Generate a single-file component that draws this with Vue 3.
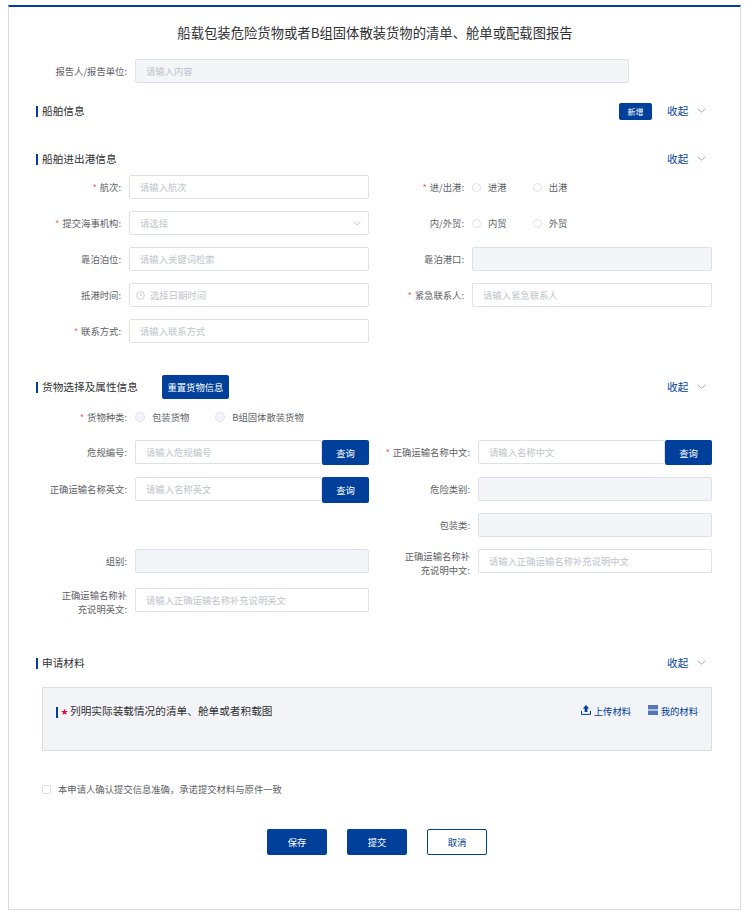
<template>
  <div class="page">
    <h1 class="title">船载包装危险货物或者B组固体散装货物的清单、舱单或配载图报告</h1>

    <div class="field reporter">
      <label class="label">报告人/报告单位:</label>
      <input class="input" disabled placeholder="请输入内容" />
    </div>

    <div class="section-head ship-head">
      <span class="section-title">船舶信息</span>
      <button class="btn add">新增</button>
      <span class="fold">收起<svg class="fold-icon" viewBox="0 0 10 5"><path d="M.5.5 5 4.5 9.5.5" /></svg></span>
    </div>

    <div class="section-head port-head">
      <span class="section-title">船舶进出港信息</span>
      <span class="fold">收起<svg class="fold-icon" viewBox="0 0 10 5"><path d="M.5.5 5 4.5 9.5.5" /></svg></span>
    </div>

    <div class="grid port-grid">
      <div class="field">
        <label class="label"><i>*</i>航次:</label>
        <input class="input" placeholder="请输入航次" />
      </div>
      <div class="field">
        <label class="label"><i>*</i>进/出港:</label>
        <div class="radios">
          <span v-for="r in ['进港', '出港']" :key="r" class="radio"><b></b>{{ r }}</span>
        </div>
      </div>
      <div class="field">
        <label class="label"><i>*</i>提交海事机构:</label>
        <div class="select">
          <input class="input" placeholder="请选择" />
          <svg class="select-icon" viewBox="0 0 8 5"><path d="M.5.5 4 4 7.5.5" /></svg>
        </div>
      </div>
      <div class="field">
        <label class="label">内/外贸:</label>
        <div class="radios">
          <span v-for="r in ['内贸', '外贸']" :key="r" class="radio"><b></b>{{ r }}</span>
        </div>
      </div>
      <div class="field">
        <label class="label">靠泊泊位:</label>
        <input class="input" placeholder="请输入关键词检索" />
      </div>
      <div class="field">
        <label class="label">靠泊港口:</label>
        <input class="input" disabled />
      </div>
      <div class="field">
        <label class="label">抵港时间:</label>
        <div class="select">
          <svg class="clock" viewBox="0 0 9 9"><circle cx="4.5" cy="4.5" r="3.9" /><path d="M4.5 2.2v2.4h2" /></svg>
          <input class="input date" placeholder="选择日期时间" />
        </div>
      </div>
      <div class="field">
        <label class="label"><i>*</i>紧急联系人:</label>
        <input class="input" placeholder="请输入紧急联系人" />
      </div>
      <div class="field">
        <label class="label"><i>*</i>联系方式:</label>
        <input class="input" placeholder="请输入联系方式" />
      </div>
    </div>

    <div class="section-head cargo-head">
      <span class="section-title">货物选择及属性信息</span>
      <button class="btn reset">重置货物信息</button>
      <span class="fold">收起<svg class="fold-icon" viewBox="0 0 10 5"><path d="M.5.5 5 4.5 9.5.5" /></svg></span>
    </div>

    <div class="field cargo-kind">
      <label class="label"><i>*</i>货物种类:</label>
      <div class="radios off">
        <span v-for="r in ['包装货物', 'B组固体散装货物']" :key="r" class="radio"><b></b>{{ r }}</span>
      </div>
    </div>

    <div class="grid cargo-grid">
      <div class="field">
        <label class="label">危规编号:</label>
        <div class="query"><input class="input" placeholder="请输入危规编号" /><button class="btn">查询</button></div>
      </div>
      <div class="field">
        <label class="label"><i>*</i>正确运输名称中文:</label>
        <div class="query"><input class="input" placeholder="请输入名称中文" /><button class="btn">查询</button></div>
      </div>
      <div class="field">
        <label class="label">正确运输名称英文:</label>
        <div class="query"><input class="input" placeholder="请输入名称英文" /><button class="btn tall">查询</button></div>
      </div>
      <div class="field">
        <label class="label">危险类别:</label>
        <input class="input" disabled />
      </div>
      <div class="field empty"></div>
      <div class="field">
        <label class="label">包装类:</label>
        <input class="input" disabled />
      </div>
      <div class="field">
        <label class="label">组别:</label>
        <input class="input" disabled />
      </div>
      <div class="field">
        <label class="label two-line">正确运输名称补充说明中文:</label>
        <input class="input" placeholder="请输入正确运输名称补充说明中文" />
      </div>
      <div class="field">
        <label class="label two-line">正确运输名称补充说明英文:</label>
        <input class="input" placeholder="请输入正确运输名称补充说明英文" />
      </div>
    </div>

    <div class="section-head apply-head">
      <span class="section-title">申请材料</span>
      <span class="fold">收起<svg class="fold-icon" viewBox="0 0 10 5"><path d="M.5.5 5 4.5 9.5.5" /></svg></span>
    </div>

    <div class="material">
      <span class="material-name"><em>★</em>列明实际装载情况的清单、舱单或者积载图</span>
      <span class="material-link">
        <svg class="link-icon" viewBox="0 0 10 10">
          <path class="solid" d="M5 0 8.2 3.4H6.4V7H3.6V3.4H1.8z" />
          <path class="line" d="M.5 6v3.4h9V6" />
        </svg>上传材料
      </span>
      <span class="material-link mine">
        <svg class="link-icon" viewBox="0 0 10 10">
          <rect class="solid" width="10" height="4.2" />
          <rect class="solid" y="5.6" width="10" height="4.4" />
          <rect class="soft" y="4.2" width="10" height="1.4" />
        </svg>我的材料
      </span>
    </div>

    <label class="agree"><span class="check"></span>本申请人确认提交信息准确，承诺提交材料与原件一致</label>

    <div class="actions">
      <button class="btn">保存</button>
      <button class="btn">提交</button>
      <button class="btn plain">取消</button>
    </div>
  </div>
</template>

<script setup>
</script>

<style>
body {
  background: #fff;
}
</style>

<style scoped>
.page {
  box-sizing: border-box;
  width: 733px;
  height: 905px;
  margin: 5px 0 0 8px;
  padding: 0 28px 0 27px;
  border: 1px solid #ddd;
  border-top: 2px solid #00409a;
  font-family: "Noto Sans CJK SC", "Liberation Sans", sans-serif;
  font-size: 9.33px;
  color: #606266;
}
.title {
  height: 52px;
  margin: 0;
  padding-left: 2px;
  font-size: 13.33px;
  font-weight: 400;
  line-height: 52px;
  text-align: center;
  color: #303133;
}
.field {
  display: flex;
  align-items: flex-start;
  height: 24px;
}
.label {
  box-sizing: border-box;
  flex: 1;
  min-width: 0;
  padding-right: 8px;
  line-height: 24px;
  text-align: right;
}
.label i {
  margin-right: 3px;
  font-style: normal;
  color: #f56c6c;
}
.two-line {
  flex: none;
  width: 74px;
  margin-left: auto;
  line-height: 14px;
}
.input {
  box-sizing: border-box;
  width: 240px;
  height: 24px;
  padding: 0 10px;
  border: 1px solid #dfe1ea;
  border-radius: 2px;
  outline: none;
  background: #fff;
  font: inherit;
  color: #606266;
}
.input::placeholder {
  color: #c0c4cc;
}
.input:disabled {
  background: #f4f5f9;
}
.reporter .label {
  flex: none;
  width: 99px;
}
.reporter .input {
  width: 494px;
}
.section-head {
  display: flex;
  align-items: center;
  height: 24px;
}
.section-title {
  height: 11px;
  padding-left: 4px;
  border-left: 2px solid #00409a;
  font-size: 10.67px;
  line-height: 9px;
  color: #303133;
}
.ship-head {
  margin-top: 16px;
}
.port-head {
  margin-top: 24px;
}
.cargo-head {
  height: 25px;
  margin-top: 32px;
}
.apply-head {
  margin-top: 39px;
}
.fold {
  display: flex;
  align-items: center;
  width: 39px;
  margin: -2px 6px 0 auto;
  font-size: 10.67px;
  white-space: nowrap;
  color: #00409a;
}
.add + .fold {
  margin-left: 15px;
}
.fold-icon {
  flex: none;
  width: 9px;
  height: 5px;
  margin-left: 9px;
  fill: none;
  stroke: #7a90bd;
  stroke-width: .8;
}
.btn {
  width: 47px;
  height: 25px;
  padding: 0;
  border: 0;
  border-radius: 2px;
  background: #00409a;
  font: inherit;
  color: #fff;
}
.add {
  width: 33px;
  height: 17px;
  margin-left: auto;
  font-size: 8px;
}
.reset {
  width: 67px;
  height: 24px;
  margin: -1px 0 0 24px;
}
.grid {
  display: grid;
  grid-template-columns: 333px 332px;
  column-gap: 11px;
}
.port-grid {
  margin-top: 4px;
  row-gap: 12px;
}
.cargo-grid {
  grid-template-rows: 25px 24px 24px 27px;
  margin-top: 11px;
  row-gap: 12px;
}
.radios {
  display: flex;
  gap: 26px;
  box-sizing: border-box;
  width: 240px;
  height: 24px;
}
.radio {
  display: flex;
  align-items: center;
}
.radio b {
  box-sizing: border-box;
  width: 9px;
  height: 9px;
  margin-right: 7px;
  border: 1px solid #dfe1ea;
  border-radius: 50%;
  background: #fff;
}
.off b {
  width: 10px;
  height: 10px;
  background: #f4f5f9;
}
.select {
  position: relative;
}
.select-icon {
  position: absolute;
  top: 10px;
  right: 8px;
  width: 8px;
  height: 5px;
  fill: none;
  stroke: #c0c4cc;
  stroke-width: .8;
}
.clock {
  position: absolute;
  top: 8px;
  left: 7px;
  width: 9px;
  height: 9px;
  fill: none;
  stroke: #c0c4cc;
  stroke-width: .8;
}
.date {
  padding-left: 20px;
}
.cargo-kind {
  margin-top: 5px;
}
.cargo-kind .label {
  flex: none;
  width: 99px;
}
.cargo-grid .field > .input,
.query {
  width: 234px;
}
.query {
  display: flex;
}
.query .input {
  flex: 1;
  width: 0;
}
.tall {
  height: 26px;
}
.material {
  display: flex;
  align-items: flex-start;
  box-sizing: border-box;
  height: 64px;
  margin: 12px 0 0 6px;
  padding: 15px 13px 0;
  border: 1px solid #ddd;
  background: #f3f4f8;
}
.material-name {
  position: relative;
  padding-left: 14px;
  font-size: 10.67px;
  line-height: 16px;
  color: #303133;
}
.material-name::before {
  content: "";
  position: absolute;
  top: 4px;
  left: 0;
  width: 2px;
  height: 11px;
  background: #00409a;
}
.material-name em {
  position: absolute;
  top: 1px;
  left: 4.5px;
  font-family: "DejaVu Sans", sans-serif;
  font-size: 9px;
  font-style: normal;
  line-height: 16px;
  color: #e5004f;
}
.material-link {
  display: flex;
  align-items: center;
  height: 16px;
  margin-left: auto;
  color: #00409a;
}
.mine {
  margin-left: 17px;
}
.link-icon {
  width: 10px;
  height: 10px;
  margin: -2px 2.67px 0 0;
  overflow: visible;
}
.solid {
  fill: #00409a;
}
.soft {
  fill: #a9bcd9;
}
.line {
  fill: none;
  stroke: #00409a;
}
.mine .solid {
  fill: #5478b4;
}
.agree {
  display: flex;
  align-items: center;
  height: 16px;
  margin: 30px 0 0 6px;
}
.check {
  box-sizing: border-box;
  width: 9px;
  height: 9px;
  margin-right: 7px;
  border: 1px solid #dfe1ea;
  border-radius: 1px;
}
.actions {
  display: flex;
  justify-content: center;
  gap: 20px;
  margin-top: 32px;
  padding-left: 6px;
}
.actions .btn {
  width: 60px;
  height: 26px;
}
.actions .plain {
  border: 1px solid #00409a;
  background: #fff;
  color: #00409a;
}
</style>
